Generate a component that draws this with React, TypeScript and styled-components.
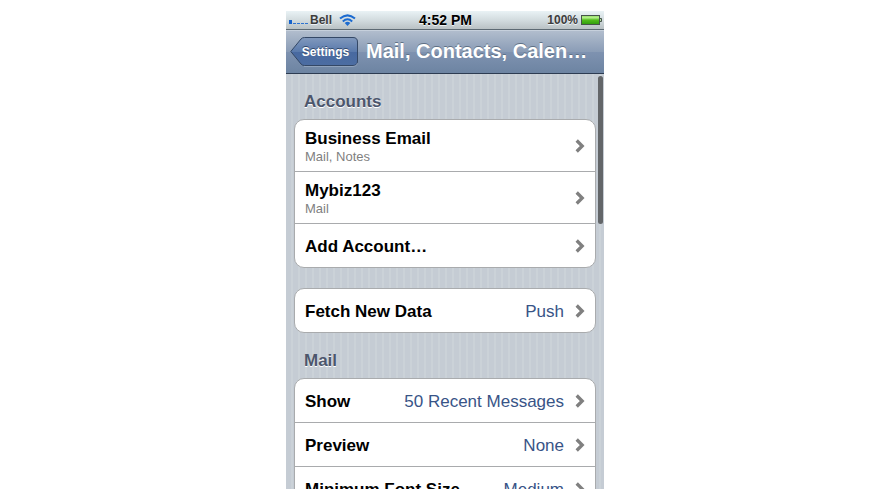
import React from "react";
import styled, { createGlobalStyle } from "styled-components";

const GlobalStyle = createGlobalStyle`
  *, *::before, *::after { box-sizing: border-box; }
  body {
    margin: 0;
    background: #fff;
    font-family: "Liberation Sans", Arial, Helvetica, sans-serif;
  }
  button { font-family: inherit; border: 0; padding: 0; background: none; cursor: pointer; }
`;

const Page = styled.div`
  display: flex;
  justify-content: center;
  height: 100vh;
  padding: 11px 0 11px 1px;
`;

const Phone = styled.div`
  display: flex;
  flex-direction: column;
  width: 100%;
  max-width: 318px;
  overflow: hidden;
`;

const StatusBar = styled.div`
  display: grid;
  grid-template-columns: 1fr auto 1fr;
  align-items: center;
  flex: none;
  height: 19px;
  padding: 0 2px 0 3px;
  border-bottom: 1px solid #5d6a73;
  background: linear-gradient(#e9f2f5, #d3dcdf 50%, #b9c1c4);
  color: #3c3c3c;
  font-size: 12px;
  font-weight: bold;
  line-height: 16px;
  text-shadow: 0 1px 0 #eef3f5;
`;

const Carrier = styled.div`
  display: flex;
  align-items: center;
  gap: 2px;
`;

const CarrierName = styled.span`
  padding-right: 5px;
`;

const Clock = styled.time`
  color: #000;
  font-size: 14px;
`;

const Power = styled.div`
  display: flex;
  align-items: center;
  justify-content: flex-end;
  gap: 3px;
`;

const NavBar = styled.header`
  display: flex;
  align-items: center;
  flex: none;
  gap: 8px;
  height: 44px;
  padding: 0 8px 0 4px;
  border-top: 1px solid #c6d0dc;
  border-bottom: 1px solid #2d3c52;
  background: linear-gradient(#b1bdcd, #8a9cb6 50%, #7e92b0 51%, #6d84a2);
`;

const Title = styled.h1`
  margin: 0;
  padding-bottom: 2px;
  color: #fff;
  font-size: 20px;
  line-height: 24px;
  white-space: nowrap;
  text-shadow: 0 -1px 0 #5f7085;
`;

const BackButton = styled.button`
  position: relative;
  flex: none;
  width: 68px;
  height: 30px;
  color: #fff;

  svg { position: absolute; inset: 0; }
`;

const BackLabel = styled.span`
  position: relative;
  padding-left: 3px;
  font-size: 12px;
  font-weight: bold;
  line-height: 16px;
  text-shadow: 0 -1px 0 #33496b;
`;

const Content = styled.main`
  position: relative;
  flex: 1;
  min-height: 0;
  overflow: hidden;
  padding: 16px 8px 0;
  background: repeating-linear-gradient(
    90deg,
    #c5ccd4 0 5px,
    #cbd2d8 5px 7px
  );
`;

const ScrollThumb = styled.div`
  position: absolute;
  top: 2px;
  right: 1px;
  width: 5px;
  height: 148px;
  border-radius: 3px;
  background: #636669;
`;

const SectionTitle = styled.h2`
  margin: 0 0 6px 10px;
  color: #4c566c;
  font-size: 17px;
  line-height: 23px;
  text-shadow: 0 1px 0 #fff;
`;

const Group = styled.ul<{ $gap: number }>`
  margin: 0 0 ${(p) => p.$gap}px;
  padding: 0;
  border: 1px solid #a9abad;
  border-radius: 10px;
  overflow: hidden;
  background: #fff;
  list-style: none;
`;

const Item = styled.li`
  & + & { border-top: 1px solid #a9abad; }
`;

const RowButton = styled.button<{ $tall: boolean }>`
  display: flex;
  align-items: center;
  gap: 11px;
  width: 100%;
  height: ${(p) => (p.$tall ? 51 : 43)}px;
  padding: 0 10px;
  text-align: left;
`;

const Labels = styled.span`
  display: flex;
  flex: 1;
  flex-direction: column;
  min-width: 0;
  padding-top: 3px;
`;

const Name = styled.span`
  color: #000;
  font-size: 17px;
  font-weight: bold;
  line-height: 20px;
  white-space: nowrap;
`;

const Detail = styled.span`
  color: #7f7f7f;
  font-size: 13px;
  line-height: 16px;
`;

const Value = styled.span`
  padding-top: 3px;
  color: #385487;
  font-size: 17px;
  line-height: 20px;
  white-space: nowrap;
`;

const Chevron = () => (
  <svg width="10" height="14" viewBox="0 0 10 14" aria-hidden="true">
    <path d="M1.700 1.500 7.200 7 1.700 12.500" fill="none" stroke="#808080" strokeWidth="3.300" />
  </svg>
);

const Signal = () => (
  <svg width="19" height="10" viewBox="0 0 19 10" aria-hidden="true">
    <rect x="0" y="5" width="3" height="4" fill="#1763cc" />
    <path d="M4 8.500h3M8 8.500h3M12 8.500h3M16 8.500h3" stroke="#2f74d0" />
  </svg>
);

const Wifi = () => (
  <svg width="17" height="12" viewBox="0 0 17 12" aria-hidden="true">
    <g fill="none" stroke="#1c6bd0" strokeWidth="2">
      <path d="M1 4.600Q8.500-1.900 16 4.600" />
      <path d="M3.800 7.400Q8.500 3.200 13.200 7.400" />
    </g>
    <path d="M5.700 9Q8.500 6.600 11.300 9L8.500 12Z" fill="#1c6bd0" />
  </svg>
);

const Battery = () => (
  <svg width="21" height="11" viewBox="0 0 21 11" aria-hidden="true">
    <defs>
      <linearGradient id="charge" x1="0" y1="0" x2="0" y2="1">
        <stop offset="0" stopColor="#8fdc62" />
        <stop offset=".25" stopColor="#b6f08d" />
        <stop offset=".5" stopColor="#51bd1c" />
        <stop offset="1" stopColor="#2f9b0c" />
      </linearGradient>
    </defs>
    <rect x=".5" y=".5" width="18" height="9" fill="url(#charge)" stroke="#46554a" />
    <path d="M19 3.500h1.500v3H19" fill="#b9d9a6" stroke="#46554a" />
  </svg>
);

const BackShape = () => (
  <svg width="68" height="30" viewBox="0 0 68 30" aria-hidden="true">
    <defs>
      <linearGradient id="back" x1="0" y1="0" x2="0" y2="1">
        <stop offset="0" stopColor="#8199bd" />
        <stop offset=".5" stopColor="#5a7aac" />
        <stop offset=".51" stopColor="#4869a0" />
        <stop offset="1" stopColor="#4c6da2" />
      </linearGradient>
    </defs>
    <path
      d="M.8 14.500 11 2Q12.300.5 14.500.5H63Q67.500.5 67.500 5V24Q67.500 28.500 63 28.500H14.500Q12.300 28.500 11 27Z"
      fill="url(#back)"
      stroke="#344866"
    />
    <path d="M14 29.500H63Q67 29.500 67.500 26" fill="none" stroke="#a5b4c9" strokeOpacity=".6" />
  </svg>
);

type Row = { name: string; detail?: string; value?: string };
type Section = { title?: string; gap: number; rows: Row[] };

const sections: Section[] = [
  {
    title: "Accounts",
    gap: 20,
    rows: [
      { name: "Business Email", detail: "Mail, Notes" },
      { name: "Mybiz123", detail: "Mail" },
      { name: "Add Account…" },
    ],
  },
  { gap: 16, rows: [{ name: "Fetch New Data", value: "Push" }] },
  {
    title: "Mail",
    gap: 16,
    rows: [
      { name: "Show", value: "50 Recent Messages" },
      { name: "Preview", value: "None" },
      { name: "Minimum Font Size", value: "Medium" },
    ],
  },
];

export default function App() {
  return (
    <>
      <GlobalStyle />
      <Page>
        <Phone>
          <StatusBar>
            <Carrier>
              <Signal />
              <CarrierName>Bell</CarrierName>
              <Wifi />
            </Carrier>
            <Clock>4:52 PM</Clock>
            <Power>
              <span>100%</span>
              <Battery />
            </Power>
          </StatusBar>
          <NavBar>
            <BackButton type="button">
              <BackShape />
              <BackLabel>Settings</BackLabel>
            </BackButton>
            <Title>Mail, Contacts, Calen…</Title>
          </NavBar>
          <Content>
            {sections.map((section, i) => (
              <React.Fragment key={i}>
                {section.title && <SectionTitle>{section.title}</SectionTitle>}
                <Group $gap={section.gap}>
                  {section.rows.map((row) => (
                    <Item key={row.name}>
                      <RowButton type="button" $tall={Boolean(row.detail)}>
                        <Labels>
                          <Name>{row.name}</Name>
                          {row.detail && <Detail>{row.detail}</Detail>}
                        </Labels>
                        {row.value && <Value>{row.value}</Value>}
                        <Chevron />
                      </RowButton>
                    </Item>
                  ))}
                </Group>
              </React.Fragment>
            ))}
            <ScrollThumb />
          </Content>
        </Phone>
      </Page>
    </>
  );
}
